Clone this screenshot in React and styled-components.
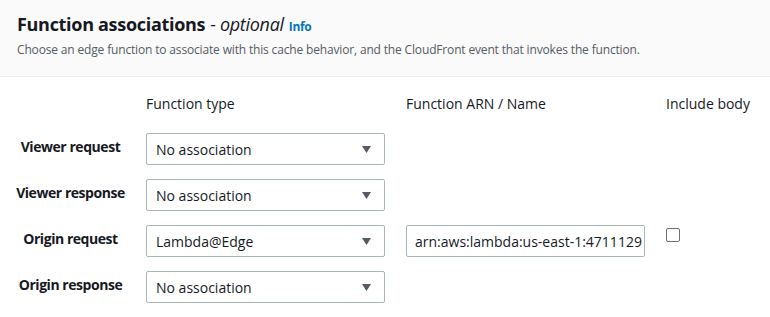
import React from "react";
import styled, { createGlobalStyle } from "styled-components";

const Global = createGlobalStyle`
  html, body { margin: 0; padding: 0; background: #ffffff; }
  body { font-family: "Open Sans", "Noto Sans", sans-serif; color: #16191f; }
  * { box-sizing: border-box; }
`;

const Panel = styled.div`
  width: 770px;
  height: 317px;
  background: #ffffff;
  overflow: hidden;
`;

const Header = styled.div`
  background: #fafafa;
  border-bottom: 1px solid #eaeded;
  height: 77px;
  padding: 12px 17px 0 17px;
`;

const Title = styled.h2`
  margin: 0;
  font-size: 18px;
  line-height: 24px;
  font-weight: 700;
  color: #16191f;
  display: flex;
  align-items: baseline;
  gap: 5px;
`;

const TitleText = styled.span`
  letter-spacing: -0.3px;
`;

const Optional = styled.span`
  font-weight: 400;
  font-style: italic;
  letter-spacing: -0.3px;
`;

const InfoLink = styled.a`
  font-size: 12px;
  font-weight: 700;
  color: #0073bb;
  text-decoration: none;
  font-style: normal;
  letter-spacing: -0.3px;
`;

const Description = styled.p`
  margin: 3px 0 0 0;
  font-size: 12px;
  line-height: 16px;
  letter-spacing: -0.16px;
  color: #545b64;
`;

const Grid = styled.div`
  display: grid;
  grid-template-columns: 109px 239px 239px auto;
  column-gap: 21px;
  row-gap: 14px;
  padding: 17px 0 0 16px;
  align-items: center;
`;

const ColHead = styled.div`
  font-size: 14px;
  line-height: 20px;
  color: #16191f;
  padding-bottom: 5px;
`;

const RowLabel = styled.div`
  font-size: 14px;
  font-weight: 700;
  text-align: center;
  line-height: 20px;
  letter-spacing: -0.45px;
  margin-top: -4px;
  color: #16191f;
  white-space: nowrap;
`;

const SelectBox = styled.div`
  height: 32px;
  border: 1px solid #aab7b8;
  border-radius: 2px;
  display: flex;
  align-items: center;
  justify-content: space-between;
  padding: 0 13px 0 9px;
  font-size: 14px;
  color: #16191f;
  background: #fff;
`;

const Caret = styled.svg`
  width: 9px;
  height: 7px;
  display: block;
`;

const TextInput = styled.div`
  height: 32px;
  border: 1px solid #aab7b8;
  border-radius: 2px;
  display: flex;
  align-items: center;
  padding: 0 8px;
  font-size: 14px;
  color: #16191f;
  white-space: nowrap;
  overflow: hidden;
`;

const CheckCell = styled.div`
  align-self: start;
  padding-top: 3px;
`;

const Checkbox = styled.span`
  display: block;
  width: 14px;
  height: 14px;
  border: 1px solid #687078;
  border-radius: 2px;
  background: #fff;
`;

const Empty = styled.div``;

function Select({ value }) {
  return (
    <SelectBox>
      <span>{value}</span>
      <Caret viewBox="0 0 9 7">
        <path d="M0 0 H9 L4.5 7 Z" fill="#545b64" />
      </Caret>
    </SelectBox>
  );
}

const rows = [
  { label: "Viewer request", value: "No association" },
  { label: "Viewer response", value: "No association" },
  { label: "Origin request", value: "Lambda@Edge", arn: "arn:aws:lambda:us-east-1:4711129" },
  { label: "Origin response", value: "No association" },
];

export default function App() {
  return (
    <Panel>
      <Global />
      <Header>
        <Title>
          <TitleText>Function associations</TitleText>
          <Optional>- optional</Optional>
          <InfoLink href="#">Info</InfoLink>
        </Title>
        <Description>
          Choose an edge function to associate with this cache behavior, and the CloudFront event that invokes the function.
        </Description>
      </Header>
      <Grid>
        <Empty />
        <ColHead>Function type</ColHead>
        <ColHead>Function ARN / Name</ColHead>
        <ColHead>Include body</ColHead>
        {rows.map((r) => (
          <React.Fragment key={r.label}>
            <RowLabel>{r.label}</RowLabel>
            <Select value={r.value} />
            {r.arn ? <TextInput>{r.arn}</TextInput> : <Empty />}
            {r.arn ? (
              <CheckCell>
                <Checkbox />
              </CheckCell>
            ) : (
              <Empty />
            )}
          </React.Fragment>
        ))}
      </Grid>
    </Panel>
  );
}
